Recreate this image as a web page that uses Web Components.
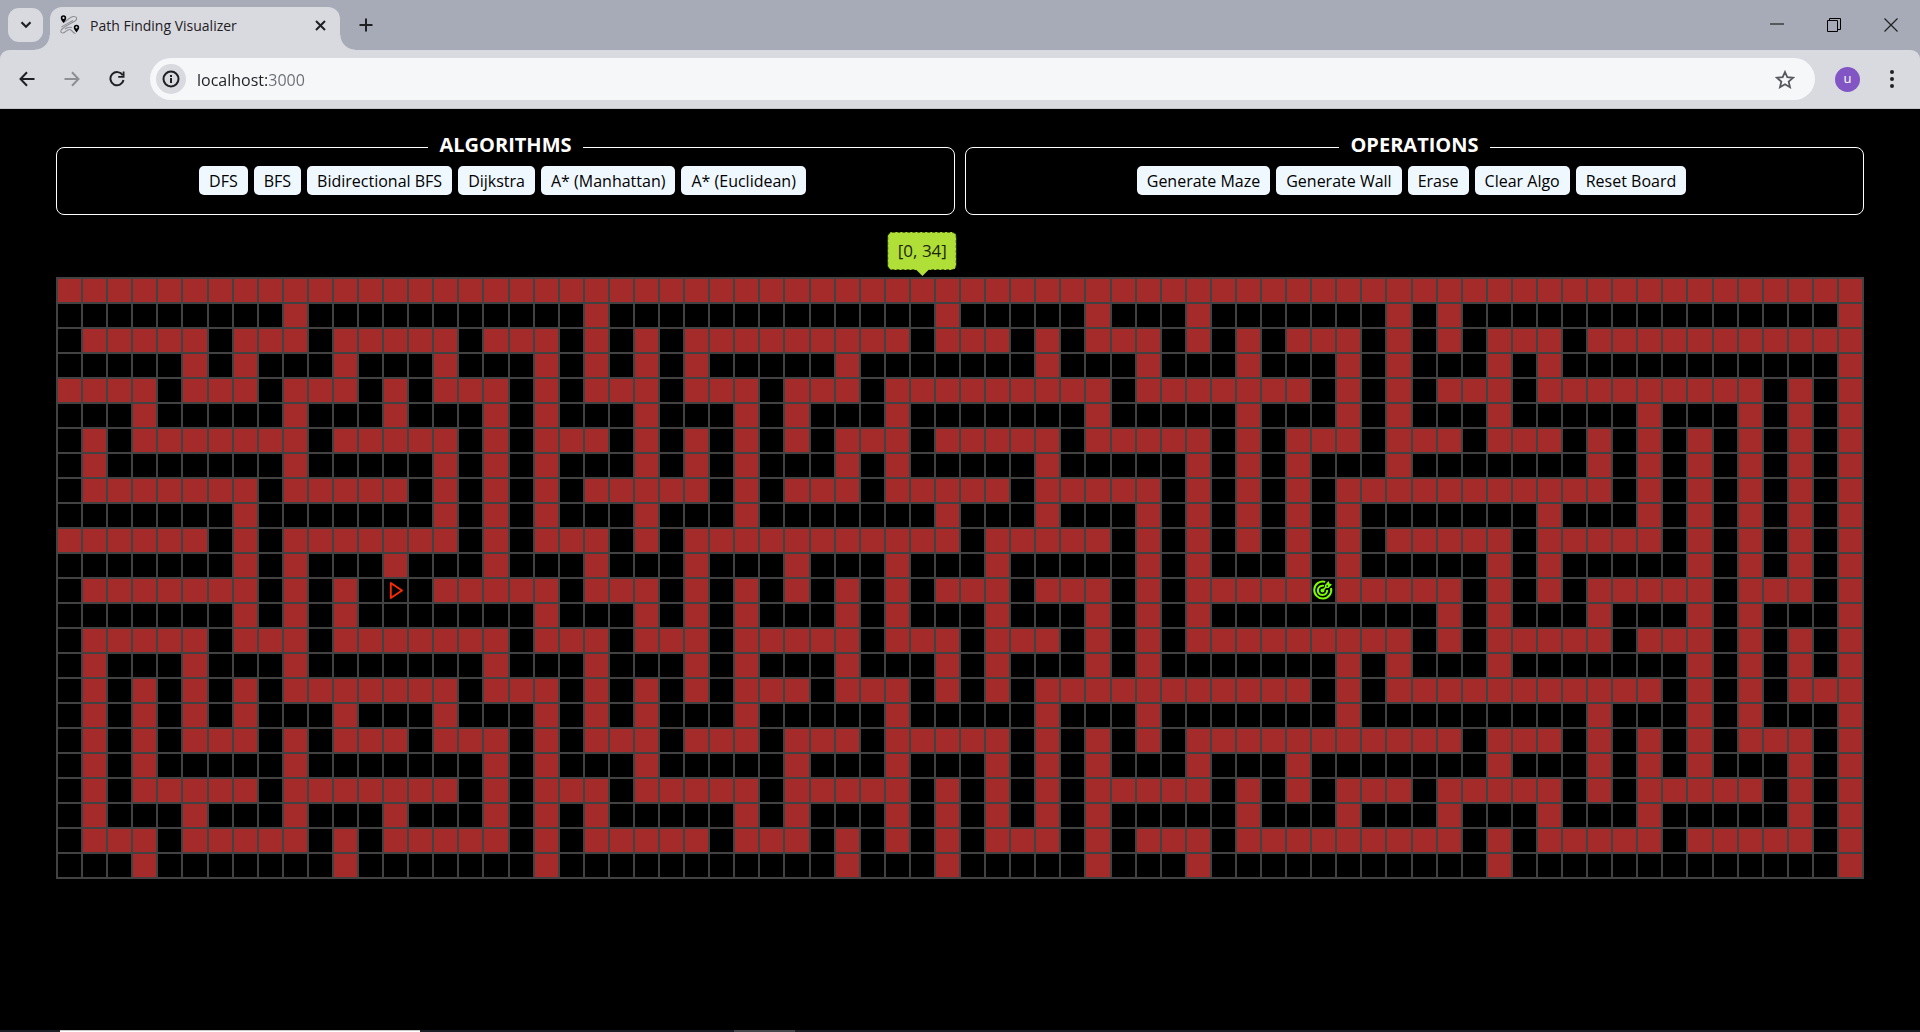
<!DOCTYPE html>
<html lang="en">
<head>
<meta charset="utf-8">
<title>Path Finding Visualizer</title>
<style>
  html, body { margin: 0; height: 100%; background: #000; }
  body { font-family: "Open Sans", "Noto Sans", sans-serif; overflow: hidden; }
</style>
</head>
<body>
<browser-window>
  <tab-strip slot="tabs" page-title="Path Finding Visualizer"></tab-strip>
  <address-bar slot="toolbar" url="localhost:3000" user="u"></address-bar>
  <path-visualizer></path-visualizer>
</browser-window>

<script>
const define = (name, html, setup) => {
  const template = document.createElement('template');
  template.innerHTML = html;
  customElements.define(name, class extends HTMLElement {
    constructor() {
      super();
      this.attachShadow({ mode: 'open' }).append(template.content.cloneNode(true));
    }
    connectedCallback() {
      if (setup && !this.ready) { this.ready = true; setup(this, this.shadowRoot); }
    }
  });
};

define('browser-window', `
  <style>
    :host { display: flex; flex-direction: column; height: 100vh; background: #000; }
    main { flex: 1; min-height: 0; }
    footer { display: flex; flex: none; height: 2px; padding-left: 60px; background: #1b2026; }
    .active { width: 360px; box-sizing: border-box; background: #fff; border-top: 1px solid #c8c8c8; }
    .other { width: 61px; margin-left: 314px; background: #45484c; }
  </style>
  <slot name="tabs"></slot>
  <slot name="toolbar"></slot>
  <main><slot></slot></main>
  <footer><span class="active"></span><span class="other"></span></footer>`);

define('tab-strip', `
  <style>
    :host { display: flex; height: 50px; flex: none; background: #a7abb7; color: #1f2023; }
    svg { display: block; fill: none; stroke: currentColor; }
    button { display: grid; place-items: center; border: 0; padding: 0; background: none; color: inherit; }
    .search { width: 35px; height: 34px; margin: 8px 7px 0 8px; border-radius: 11px; background: #d9dae0; }
    .tab { position: relative; display: flex; align-items: center; width: 290px; height: 43px; margin-top: 7px;
      box-sizing: border-box; padding: 0 8px 7px 10px; border-radius: 12px 12px 0 0; background: #d9dae0; }
    .tab::before, .tab::after { content: ""; position: absolute; bottom: 0; width: 15px; height: 15px; }
    .tab::before { right: 100%; background: radial-gradient(circle at 0 0, transparent 14px, #d9dae0 15px); }
    .tab::after { left: 100%; background: radial-gradient(circle at 100% 0, transparent 14px, #d9dae0 15px); }
    .title { flex: 1; margin-left: 10px; padding-top: 2px; font-size: 14px; line-height: 20px; }
    .close { width: 24px; height: 24px; }
    .new { width: 28px; height: 34px; margin: 8px 0 0 12px; }
    .window { display: flex; margin: 0 1px 0 auto; }
    .window button { width: 57px; height: 50px; }
  </style>
  <button class="search" aria-label="Search tabs"><svg width="12" height="8" stroke-width="2.2"><path d="M1.5 1.2 6 5.7l4.500-4.500"/></svg></button>
  <div class="tab">
    <svg width="20" height="20" viewBox="0 0 20 20">
      <path stroke="#8b8d92" stroke-width="1.100" d="M3.500 7.500C7 6.500 9 2 13 1.500c4-.3 5 2.500 2 4.500-4 2.500-9 4-13.500 8.500-2 3 1 4.500 3.500 2.500 2-1.500 4-3.500 6-2 1.500 1 2 3.500 4.500 3.500M1.500 12C5 10 9 7.500 13 5.500M5 14c2.500-2 5-2 7-1.500"/>
      <path fill="#000" stroke="none" d="M3.500 8C1.700 5.500.800 4.500.800 3a2.700 2.700 0 0 1 5.400 0c0 1.500-.9 2.500-2.700 5zM16.500 17.500c-1.900-2.600-2.700-3.600-2.700-5a2.700 2.700 0 0 1 5.400 0c0 1.400-.8 2.400-2.700 5z"/>
      <g fill="#d9dae0" stroke="none"><circle cx="3.500" cy="2.900" r="1.100"/><circle cx="16.500" cy="12.400" r="1.100"/></g>
    </svg>
    <span class="title"></span>
    <button class="close" aria-label="Close tab"><svg width="11" height="11" stroke-width="2"><path d="m1 1 9 9M10 1l-9 9"/></svg></button>
  </div>
  <button class="new" aria-label="New tab"><svg width="14" height="14" stroke-width="2"><path d="M7 .5v13M.5 7h13"/></svg></button>
  <div class="window">
    <button aria-label="Minimize"><svg width="14" height="14"><path stroke="#55585f" stroke-width="2" d="M0 6h14"/></svg></button>
    <button aria-label="Restore"><svg width="14" height="14"><path stroke="#000" d="M.5 2.500h10v11H.5zM2.500 2.500v-2h11v11h-3"/></svg></button>
    <button aria-label="Close window"><svg width="14" height="14" stroke-width="1.200"><path d="m.5.5 13 13M13.500.5l-13 13"/></svg></button>
  </div>`,
  (host, root) => { root.querySelector('.title').textContent = host.getAttribute('page-title'); });

define('address-bar', `
  <style>
    :host { display: block; flex: none; background: #a7abb7; color: #1f2023; }
    .bar { display: flex; align-items: center; gap: 9px; height: 58px; padding: 0 20px 0 9px; background: #d9dae0;
      border-bottom: 1px solid #c3c4c9; border-radius: 9px 9px 0 0; }
    svg { display: block; fill: none; stroke: currentColor; }
    button { display: grid; place-items: center; border: 0; padding: 0; background: none; color: inherit; font: inherit; }
    .nav { width: 36px; height: 36px; }
    .off { color: #8d8f95; }
    .box { display: flex; align-items: center; flex: 1; height: 42px; margin-left: 6px; border-radius: 21px; background: #f5f7f9; }
    .info { width: 30px; height: 30px; margin-left: 6px; border-radius: 50%; background: #d9dae0; }
    input { flex: 1; min-width: 0; height: 30px; margin-left: 11px; padding: 2px 0 0; border: 0; outline: 0; font: 16px/24px "Open Sans", sans-serif;
      color: transparent; background: linear-gradient(to right, #1f2023 71px, #6a6d73 71px); -webkit-background-clip: text; background-clip: text; }
    .star { width: 36px; height: 36px; margin-right: 12px; color: #55585d; }
    .end { display: flex; align-items: center; gap: 24px; margin-left: 11px; }
    .user { width: 25px; height: 25px; border-radius: 50%; background: #8156c4; color: #fff; font-size: 13px; line-height: 22px; padding-bottom: 3px; box-sizing: border-box; }
  </style>
  <div class="bar">
    <button class="nav" aria-label="Back"><svg width="16" height="16" stroke-width="2"><path d="M15.500 8H1.500M8 1.200 1.500 8 8 14.800"/></svg></button>
    <button class="nav off" aria-label="Forward"><svg width="16" height="16" stroke-width="2"><path d="M.5 8h14M8 1.200 14.500 8 8 14.800"/></svg></button>
    <button class="nav" aria-label="Reload"><svg width="16" height="16" stroke-width="2"><path d="M13.700 4.300A6.600 6.600 0 1 0 14.500 9"/><path fill="currentColor" stroke="none" d="M15.500.5v6.300H9.200V5h4.500V.5z"/></svg></button>
    <div class="box">
      <button class="info" aria-label="Site information"><svg width="18" height="18" stroke-width="2"><circle cx="9" cy="9" r="7.500"/><path d="M9 8v5M9 5v2"/></svg></button>
      <input aria-label="Address" spellcheck="false">
      <button class="star" aria-label="Bookmark"><svg width="20" height="19" stroke-width="1.800"><path d="m10 2 2.300 5.200 5.700.6-4.300 3.800 1.300 5.600-5-3-5 3 1.300-5.600L2 7.800l5.700-.6z"/></svg></button>
    </div>
    <div class="end">
      <button class="user"></button>
      <button aria-label="Menu"><svg width="16" height="20"><g fill="currentColor" stroke="none"><circle cx="8" cy="3" r="2"/><circle cx="8" cy="10" r="2"/><circle cx="8" cy="17" r="2"/></g></svg></button>
    </div>
  </div>`,
  (host, root) => {
    root.querySelector('input').value = host.getAttribute('url');
    root.querySelector('.user').textContent = host.getAttribute('user');
  });

define('control-group', `
  <style>
    :host { display: block; flex: 1; min-width: 0; }
    fieldset { display: flex; justify-content: center; margin: 0; padding: 5px 12px 19px; border: 1px solid #fff; border-radius: 8px; }
    legend { margin: 0 auto; padding: 0 11px 4px; font-size: 20px; line-height: 24px; font-weight: 700; color: #fff; }
  </style>
  <fieldset><legend></legend><slot></slot></fieldset>`,
  (host, root) => { root.querySelector('legend').textContent = host.getAttribute('label'); });

define('action-button', `
  <style>
    :host { display: block; margin-right: 6px; }
    button { display: block; height: 29px; padding: 2px 10px 0; border: 0; border-radius: 5px; background: #f0f8ff; color: #000;
      font: 16px/27px "Open Sans", sans-serif; white-space: nowrap; }
  </style>
  <button><slot></slot></button>`);

define('cell-tooltip', `
  <style>
    :host { position: absolute; left: 50%; bottom: calc(100% + 9px); transform: translateX(-50%); z-index: 1;
      padding: 5px 9px; border: 1px dashed #4d641c; border-radius: 5px; background: #b0df38; background-clip: border-box;
      color: #1d2508; font-size: 17px; line-height: 26px; white-space: nowrap; }
    :host::after { content: ""; position: absolute; left: 50%; top: 100%; margin-left: -7px;
      border: 7px solid transparent; border-bottom: 0; border-top-color: #b0df38; }
  </style>
  <slot></slot>`);

define('start-marker', `
  <style>:host, svg { display: block; }</style>
  <svg width="23" height="23" fill="none" stroke="#ff2a00" stroke-width="1.900" stroke-linejoin="round"><path d="M6.800 4v15L18 11.500z"/></svg>`);

define('target-marker', `
  <style>:host, svg { display: block; }</style>
  <svg width="23" height="23" fill="none" stroke="#7cfc00" stroke-width="2">
    <path d="M13.200 2.900A8.500 8.500 0 1 0 19 9M12 6.900a4.700 4.700 0 1 0 3.200 4"/>
    <circle cx="10.500" cy="11.500" r="2" fill="#7cfc00" stroke="none"/>
    <path stroke-width="1.700" d="m10.500 11.500 4.500-4.500"/>
    <path fill="#7cfc00" stroke="none" d="m13 6 3.500-4 1 2.500 2.500 1L16.500 9H13z"/>
    <path fill="#000" stroke="none" d="M14.500 6.300h1.400v1.400h-1.400z"/>
  </svg>`);

define('maze-board', `
  <style>
    :host { display: grid; grid-template-columns: repeat(72, 1fr); grid-auto-rows: 23px; gap: 2px; padding: 2px; background: #424242; }
    .cell { position: relative; background: #000; }
    .wall { background: #a52a2a; }
  </style>`,
  (host, root) => {
    const columns = 72;
    const walls = [
      '0-71',
      '9 21 35 41 45 53 55 71',
      '1-5 7-9 11-15 17-19 21 23 25-33 35-37 39 41-43 45 47 49-51 53 55 57-59 61-71',
      '5 7 11 15 19 21 23 25 31 39 43 47 51 53 57 59 71',
      '0-3 5-7 9-11 13 15-17 19 21-23 25-27 29-31 33-41 43-49 51 53 55-57 59-67 69 71',
      '3 9 13 17 19 23 27 29 33 41 47 51 53 57 63 67 69 71',
      '1 3-9 11-15 17 19-21 23 25 27 29 31-33 35-39 41-45 47 49-51 53-55 57-59 61 63 65 67 69 71',
      '1 9 15 17 19 23 25 27 31 33 39 45 47 49 53 61 63 65 67 69 71',
      '1-7 9-13 15 17 19 21-25 27 29-31 33-37 39-43 45 47 49 51-61 63 65 67 69 71',
      '7 15 17 19 23 27 35 39 43 45 47 49 51 59 63 65 67 69 71',
      '0-5 7 9-15 17 19-21 23 25-35 37-41 43 45 47 49 51 53-57 59-63 65 67 69 71',
      '7 9 13 17 21 25 29 33 37 43 45 49 51 57 59 65 67 69 71',
      '1-7 9 11 15-19 21-23 25 27 29 31 33 35-37 39-41 43 45-49 51-55 57 59 61-65 67-69 71',
      '7 9 11 19 23 25 27 31 33 37 41 43 45 55 57 61 65 67 71',
      '1-5 7-9 11-17 19-21 23-25 27-31 33-35 37-39 41 43 45-53 55 57-61 63-65 67 69 71',
      '1 5 9 17 21 25 27 31 35 37 41 43 51 53 57 65 67 69 71',
      '1 3 5 7 9-15 17-19 21 23 25 27-29 31-33 35 37 39-49 51 53-63 65 67 69-71',
      '1 3 5 7 11 15 19 21 23 27 33 39 43 51 61 65 67 71',
      '1 3 5-7 9 11-13 15-17 19 21-23 25-27 29-31 33-37 39 41 43 45-55 57-59 61 63 65 67-69 71',
      '1 3 9 17 19 23 29 33 37 39 41 45 49 57 61 63 65 69 71',
      '1 3-7 9-15 17 19-21 23-27 29-33 35 37 39 41-45 47 49 51-53 55-59 61 63-67 69 71',
      '1 5 9 13 17 19 21 27 29 33 35 37 39 41 47 51 55 59 63 69 71',
      '1-3 5-9 11 13-17 19 21-25 27-29 31 33 35 37-39 41 43-45 47-55 57 59-63 65-69 71',
      '3 11 19 31 35 41 45 57 71'
    ];
    const cells = walls.map(row => {
      const line = Array.from({ length: columns }, () => {
        const cell = document.createElement('div');
        cell.className = 'cell';
        root.append(cell);
        return cell;
      });
      for (const run of row.split(' ')) {
        const [from, to = from] = run.split('-').map(Number);
        for (let c = from; c <= to; c++) line[c].classList.add('wall');
      }
      return line;
    });
    cells[12][13].append(document.createElement('start-marker'));
    cells[12][50].append(document.createElement('target-marker'));
    const tip = document.createElement('cell-tooltip');
    tip.textContent = '[0, 34]';
    cells[0][34].append(tip);
  });

define('path-visualizer', `
  <style>
    :host { display: flex; flex-direction: column; gap: 62px; padding: 24px 56px 0; }
    .controls { display: flex; gap: 10px; }
  </style>
  <div class="controls">
    <control-group label="ALGORITHMS">
      <action-button>DFS</action-button>
      <action-button>BFS</action-button>
      <action-button>Bidirectional BFS</action-button>
      <action-button>Dijkstra</action-button>
      <action-button>A* (Manhattan)</action-button>
      <action-button>A* (Euclidean)</action-button>
    </control-group>
    <control-group label="OPERATIONS">
      <action-button>Generate Maze</action-button>
      <action-button>Generate Wall</action-button>
      <action-button>Erase</action-button>
      <action-button>Clear Algo</action-button>
      <action-button>Reset Board</action-button>
    </control-group>
  </div>
  <maze-board></maze-board>`);
</script>
</body>
</html>
